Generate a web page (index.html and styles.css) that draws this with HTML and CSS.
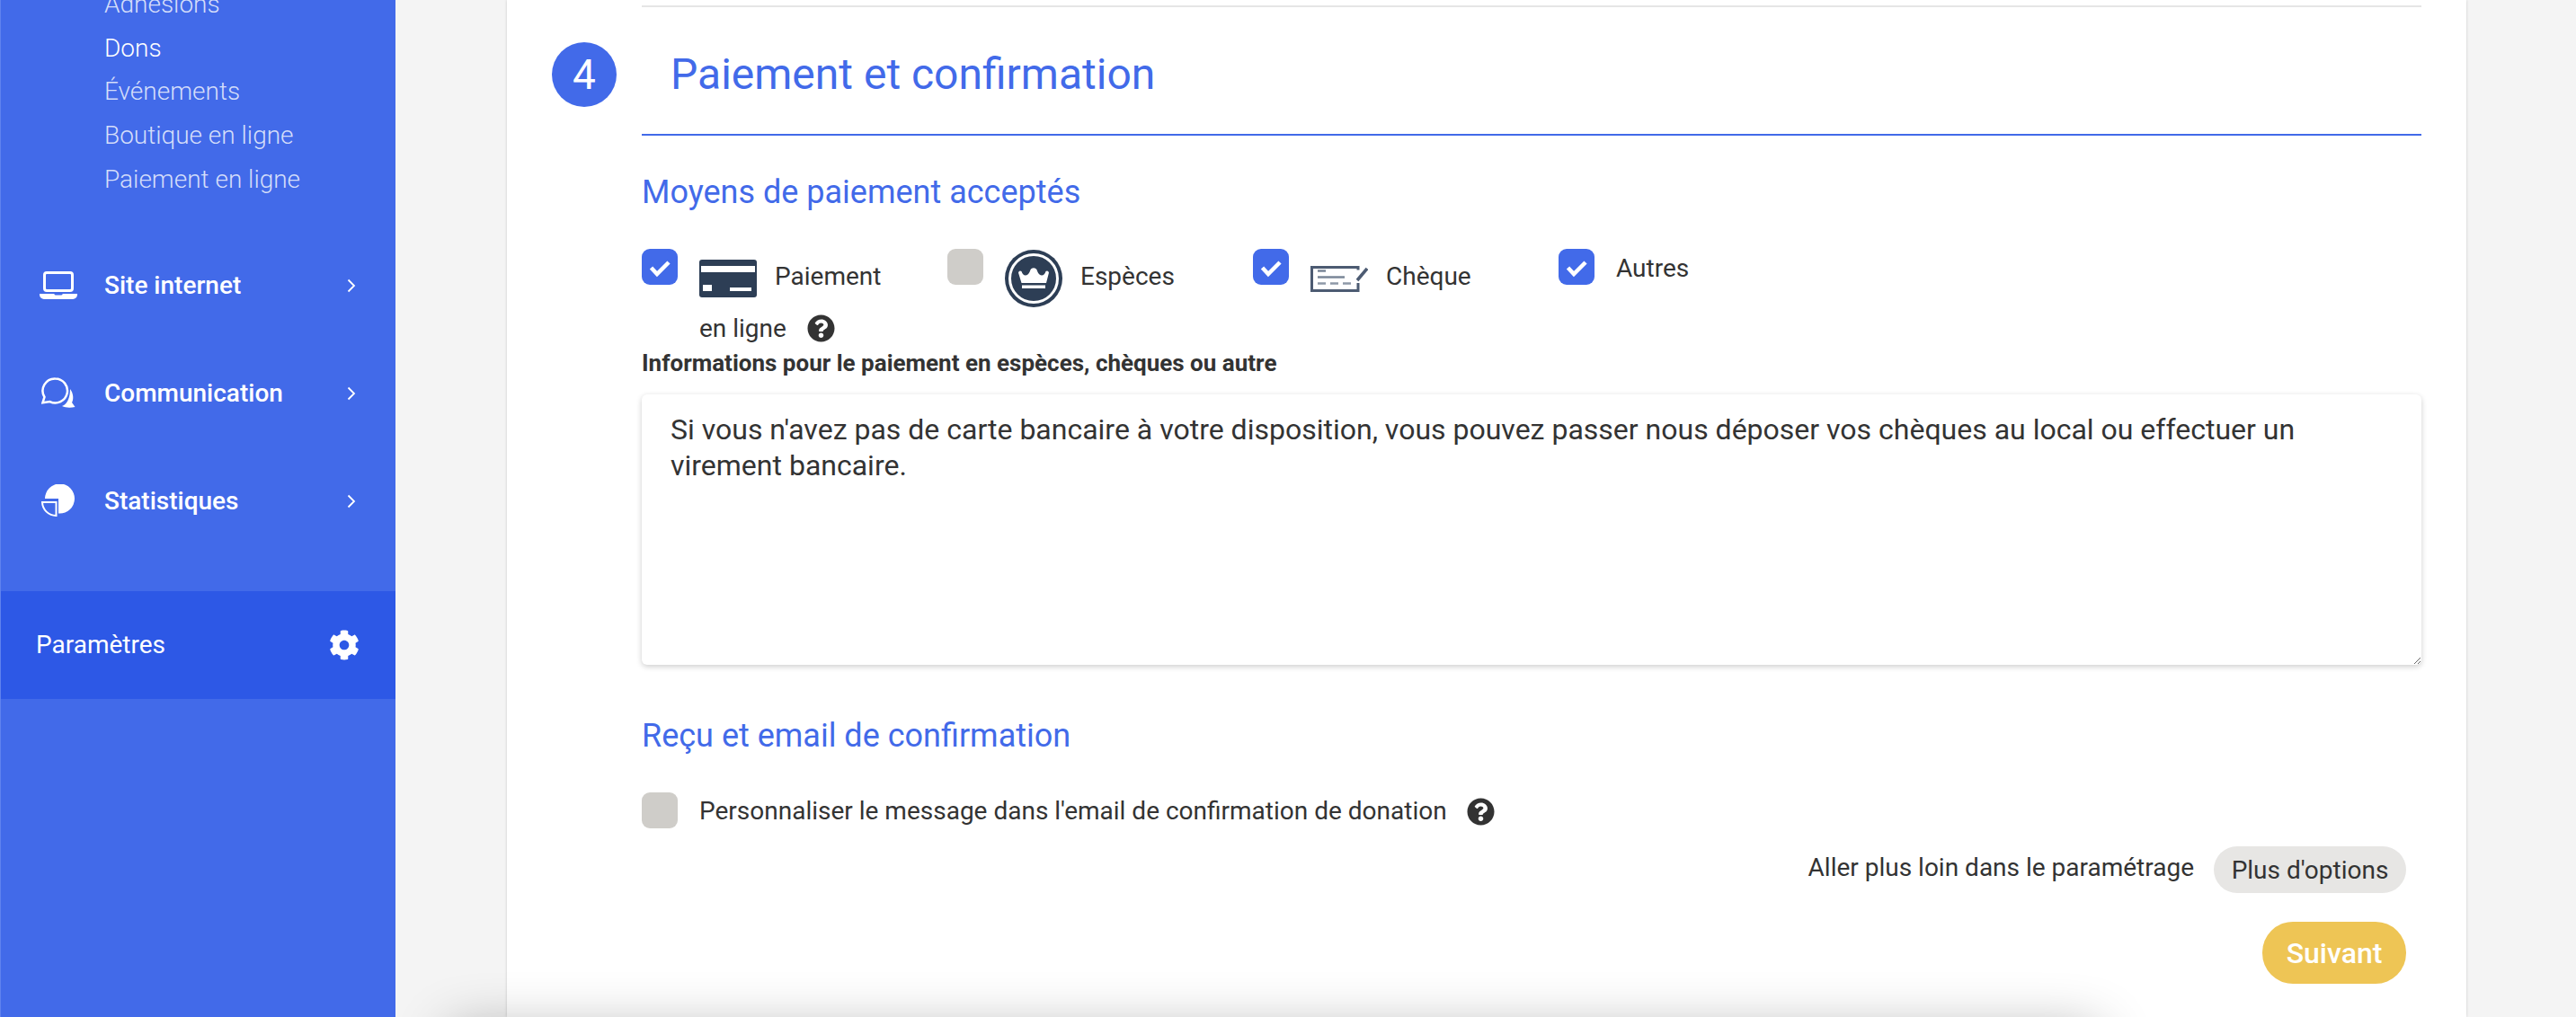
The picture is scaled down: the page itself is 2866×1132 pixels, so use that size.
FILE: index.html
```html
<!DOCTYPE html>
<html lang="fr">
<head>
<meta charset="utf-8">
<title>Paiement et confirmation</title>
<link rel="stylesheet" href="styles.css">
</head>
<body>
<aside class="sidebar">
  <ul class="sublist">
    <li>Adhésions</li>
    <li class="current">Dons</li>
    <li>Événements</li>
    <li>Boutique en ligne</li>
    <li>Paiement en ligne</li>
  </ul>
  <div class="navrow">
    <span class="navicon"><svg width="42" height="31" viewBox="0 0 42 31"><rect x="5.5" y="1.5" width="31" height="20" rx="2.5" fill="none" stroke="#fff" stroke-width="3"/><path fill="#fff" d="M0 25H16l1.5 1.5H24.5L26 25H42v1a5 5 0 0 1-5 5H5a5 5 0 0 1-5-5z"/></svg></span>
    <span class="navlabel">Site internet</span>
    <svg class="chev" width="10" height="16" viewBox="0 0 10 16"><path d="M1.5 1.5 8 8l-6.500 6.500" fill="none" stroke="#fff" stroke-width="1.800"/></svg>
  </div>
  <div class="navrow">
    <span class="navicon"><svg width="38" height="34" viewBox="0 0 38 34"><path d="M15.500 1.500a13.500 13.500 0 1 1-6 25.600L1.500 28.200l2-6.200A13.500 13.500 0 0 1 15.500 1.500z" fill="none" stroke="#fff" stroke-width="2.500"/><path fill="#fff" d="M32 13c4 5 4 12 2 15l3.500 5c-5 1-10.500 1-14.500-1 6-2 9-10 9-19z"/></svg></span>
    <span class="navlabel">Communication</span>
    <svg class="chev" width="10" height="16" viewBox="0 0 10 16"><path d="M1.5 1.5 8 8l-6.500 6.500" fill="none" stroke="#fff" stroke-width="1.800"/></svg>
  </div>
  <div class="navrow">
    <span class="navicon"><svg width="38" height="36" viewBox="0 0 38 36"><path fill="#fff" d="M4 16A16.500 16.500 0 1 1 20 32.500L19 32.500V16z"/><path d="M1 20H16.500V35A15.500 15.500 0 0 1 1 20z" fill="none" stroke="#fff" stroke-width="2"/></svg></span>
    <span class="navlabel">Statistiques</span>
    <svg class="chev" width="10" height="16" viewBox="0 0 10 16"><path d="M1.5 1.5 8 8l-6.500 6.500" fill="none" stroke="#fff" stroke-width="1.800"/></svg>
  </div>
  <div class="settings">
    <span class="settings-label">Paramètres</span>
    <svg width="34" height="34" viewBox="0 0 512 512"><path fill="#fff" d="M487.400 315.700l-42.600-24.600c4.300-23.200 4.300-47 0-70.200l42.600-24.600c4.900-2.800 7.100-8.600 5.500-14-11.100-35.600-30-67.800-54.700-94.600-3.800-4.100-10-5.100-14.800-2.300L380.800 110c-17.900-15.400-38.500-27.300-60.800-35.100V25.800c0-5.600-3.900-10.500-9.400-11.700-36.700-8.200-74.300-7.800-109.200 0-5.500 1.200-9.400 6.100-9.400 11.700V75c-22.200 7.900-42.800 19.800-60.800 35.100L88.700 85.500c-4.900-2.800-11-1.900-14.800 2.300-24.700 26.700-43.600 58.900-54.700 94.600-1.700 5.400.6 11.200 5.500 14L67.300 221c-4.300 23.200-4.300 47 0 70.200l-42.600 24.600c-4.900 2.800-7.100 8.600-5.500 14 11.100 35.600 30 67.800 54.700 94.600 3.800 4.100 10 5.100 14.800 2.300l42.600-24.600c17.900 15.400 38.500 27.300 60.800 35.100v49.200c0 5.600 3.900 10.500 9.400 11.700 36.700 8.200 74.300 7.800 109.200 0 5.500-1.200 9.400-6.100 9.400-11.700v-49.200c22.200-7.900 42.800-19.800 60.800-35.100l42.600 24.600c4.900 2.800 11 1.900 14.800-2.300 24.700-26.700 43.600-58.900 54.700-94.600 1.500-5.500-.7-11.300-5.600-14.100zM256 336c-44.100 0-80-35.900-80-80s35.900-80 80-80 80 35.900 80 80-35.900 80-80 80z"/></svg>
  </div>
</aside>

<main class="main">
  <section class="card">
    <div class="stepcol"><span class="step">4</span></div>
    <div class="content">
      <h2 class="title">Paiement et confirmation</h2>
      <h3 class="subtitle">Moyens de paiement acceptés</h3>
      <div class="methods">
        <div class="method">
          <span class="box on"><svg width="40" height="40" viewBox="0 0 40 40"><path d="M10.500 21 17 28 30 15" fill="none" stroke="#fff" stroke-width="4.500"/></svg></span>
          <p class="method-text">
            <svg class="m-icon card-icon" width="64" height="42" viewBox="0 0 64 42"><rect width="64" height="42" rx="3" fill="#2d3e55"/><rect x="2" y="7" width="60" height="7" fill="#fff"/><rect x="4" y="28" width="10" height="7" fill="#fff"/><rect x="34" y="31" width="24" height="4" fill="#fff"/></svg><span class="m-label">Paiement</span>
            en ligne<svg class="help help-a" width="31" height="31" viewBox="0 0 512 512"><path fill="#333" d="M504 256c0 136.997-111.043 248-248 248S8 392.997 8 256C8 119.083 119.043 8 256 8s248 111.083 248 248zM262.655 90c-54.497 0-89.255 22.957-116.549 63.758-3.536 5.286-2.353 12.415 2.715 16.258l34.699 26.310c5.205 3.947 12.621 3.008 16.665-2.122 17.864-22.658 30.113-35.797 57.303-35.797 20.429 0 45.698 13.148 45.698 32.958 0 14.976-12.363 22.667-32.534 33.976C247.128 238.528 216 254.941 216 296v4c0 6.627 5.373 12 12 12h56c6.627 0 12-5.373 12-12v-1.333c0-28.462 83.186-29.647 83.186-106.667 0-58.002-60.165-102-116.531-102zM256 338c-25.365 0-46 20.635-46 46 0 25.364 20.635 46 46 46s46-20.636 46-46c0-25.365-20.635-46-46-46z"/></svg>
          </p>
        </div>
        <div class="method">
          <span class="box"></span>
          <p class="method-text">
            <svg class="m-icon crown-icon" width="64" height="64" viewBox="0 0 64 64"><circle cx="32" cy="32" r="32" fill="#2d3e55"/><circle cx="32" cy="32" r="26.500" fill="#2d3e55" stroke="#fff" stroke-width="3"/><path fill="#fff" d="M15 25.500a2.500 2.500 0 0 1 3.500-1.500c.9 3.500 4 6 7 3.500 1-1 2-2.500 2.700-4.500a4 4 0 0 1 7.600 0c.7 2 1.700 3.500 2.700 4.500 3 2.500 6.100 0 7-3.500a2.500 2.500 0 0 1 3.500 1.500L46 37H18.500z"/><rect x="19" y="39.500" width="26" height="3.500" fill="#fff"/></svg><span class="m-label">Espèces</span>
          </p>
        </div>
        <div class="method">
          <span class="box on"><svg width="40" height="40" viewBox="0 0 40 40"><path d="M10.500 21 17 28 30 15" fill="none" stroke="#fff" stroke-width="4.500"/></svg></span>
          <p class="method-text">
            <svg class="m-icon cheque-icon" width="64" height="31" viewBox="0 0 64 31"><path d="M53 20v8.500H1.500V2.500H53v3" fill="none" stroke="#4c5b72" stroke-width="3"/><path d="M8 6.500h9M8 13.500h30" stroke="#7a8698" stroke-width="2.500"/><path d="M8 20.500h9M22 20.500h9M36 20.500h9" stroke="#8f99a8" stroke-width="2.500"/><path d="M52 17 63 4" stroke="#4c5b72" stroke-width="3.500"/></svg><span class="m-label">Chèque</span>
          </p>
        </div>
        <div class="method">
          <span class="box on"><svg width="40" height="40" viewBox="0 0 40 40"><path d="M10.500 21 17 28 30 15" fill="none" stroke="#fff" stroke-width="4.500"/></svg></span>
          <span class="plain-label">Autres</span>
        </div>
      </div>
      <label class="info-label" for="info">Informations pour le paiement en espèces, chèques ou autre</label>
      <textarea class="info" id="info">Si vous n'avez pas de carte bancaire à votre disposition, vous pouvez passer nous déposer vos chèques au local ou effectuer un virement bancaire.</textarea>
      <h3 class="subtitle subtitle-second">Reçu et email de confirmation</h3>
      <div class="confirm">
        <span class="box"></span>
        <span class="confirm-text">Personnaliser le message dans l'email de confirmation de donation</span>
        <svg class="help" width="31" height="31" viewBox="0 0 512 512"><path fill="#333" d="M504 256c0 136.997-111.043 248-248 248S8 392.997 8 256C8 119.083 119.043 8 256 8s248 111.083 248 248zM262.655 90c-54.497 0-89.255 22.957-116.549 63.758-3.536 5.286-2.353 12.415 2.715 16.258l34.699 26.310c5.205 3.947 12.621 3.008 16.665-2.122 17.864-22.658 30.113-35.797 57.303-35.797 20.429 0 45.698 13.148 45.698 32.958 0 14.976-12.363 22.667-32.534 33.976C247.128 238.528 216 254.941 216 296v4c0 6.627 5.373 12 12 12h56c6.627 0 12-5.373 12-12v-1.333c0-28.462 83.186-29.647 83.186-106.667 0-58.002-60.165-102-116.531-102zM256 338c-25.365 0-46 20.635-46 46 0 25.364 20.635 46 46 46s46-20.636 46-46c0-25.365-20.635-46-46-46z"/></svg>
      </div>
      <div class="more">
        <span class="more-text">Aller plus loin dans le paramétrage</span>
        <button class="btn-more" type="button">Plus d'options</button>
      </div>
      <div class="next"><button class="btn-next" type="button">Suivant</button></div>
    </div>
  </section>
  <div class="footer-shadow"></div>
</main>
</body>
</html>
```

FILE: styles.css
```css
* { box-sizing: border-box; }
html, body { margin: 0; height: 1132px; overflow: hidden; }
body {
  display: flex;
  font-family: Roboto, "Liberation Sans", sans-serif;
  color: #333;
  background: #f4f4f4;
}
p, ul, h2, h3 { margin: 0; padding: 0; }

/* Sidebar */
.sidebar {
  flex: 0 0 440px;
  height: 1132px;
  background: #426ae9;
  border-left: 1px solid #5f82ee;
  color: #fff;
  overflow: hidden;
}
.sublist {
  list-style: none;
  margin-top: -19px;
  padding: 0 0 32.500px 115px;
  font-size: 28px;
  font-weight: 300;
  line-height: 48.700px;
  color: rgba(255, 255, 255, .78);
}
.sublist .current { color: #fff; }
.navrow {
  display: flex;
  align-items: center;
  height: 120px;
}
.navicon {
  flex: 0 0 115px;
  display: flex;
  justify-content: center;
  padding-left: 12px;
}
.navlabel {
  flex: 0 0 270px;
  font-size: 28px;
  font-weight: 500;
}
.chev { margin-top: 2px; }
.settings {
  display: flex;
  align-items: center;
  justify-content: space-between;
  height: 120px;
  margin-top: 41px;
  padding: 0 40px 0 39px;
  background: #2d58e6;
}
.settings-label { font-size: 28px; margin-top: -2px; }

/* Main */
.main {
  flex: 1;
  position: relative;
  padding: 0 122px 0 124px;
}
.card {
  display: flex;
  width: 2180px;
  height: 1132px;
  padding: 6px 50px 0 50px;
  background: #fff;
  box-shadow: 0 0 3px rgba(0, 0, 0, .18);
}
.stepcol { flex: 0 0 100px; padding-top: 41px; }
.step {
  display: flex;
  align-items: center;
  justify-content: center;
  width: 72px;
  height: 72px;
  border-radius: 50%;
  background: #426ae9;
  color: #fff;
  font-size: 46px;
}
.content { flex: 1; min-width: 0; }
.title {
  height: 145px;
  padding: 48px 0 0 32px;
  border-top: 2px solid #e5e5e5;
  border-bottom: 2px solid #426ae9;
  color: #426ae9;
  font-size: 48px;
  font-weight: 400;
  line-height: 54px;
}
.subtitle {
  color: #426ae9;
  font-size: 36px;
  font-weight: 400;
  line-height: 44px;
}
.content > .subtitle:not(.subtitle-second) { margin-top: 41px; }
.subtitle-second { margin-top: 57px; }

.methods {
  display: grid;
  grid-template-columns: repeat(4, 340px);
  margin-top: 41px;
  height: 110px;
}
.method { position: relative; padding-left: 64px; }
.box {
  position: absolute;
  left: 0;
  top: 0;
  width: 40px;
  height: 40px;
  border-radius: 9px;
  background: #cfcdc9;
}
.box.on { background: #426ae9; }
.box svg { display: block; }
.method-text {
  width: 230px;
  font-size: 28px;
  line-height: 54px;
  padding-top: 4px;
}
.m-icon { display: inline-block; vertical-align: middle; margin-right: 20px; }
.crown-icon { margin-top: -12px; margin-bottom: -12px; }
.m-label { display: inline-block; vertical-align: middle; margin-bottom: 4px; }
.help-a { margin-left: 23px; vertical-align: -6px; }
.plain-label { font-size: 28px; line-height: 40px; display: block; padding-top: 2px; }

.info-label {
  display: block;
  font-size: 26px;
  font-weight: 700;
  line-height: 34px;
}
.info {
  display: block;
  width: 1980px;
  height: 301px;
  margin-top: 18px;
  padding: 19px 32px;
  border: 0;
  border-radius: 6px;
  background: #fff;
  box-shadow: 0 2px 6px rgba(0, 0, 0, .2);
  color: #333;
  font-family: Roboto, "Liberation Sans", sans-serif;
  font-size: 32px;
  line-height: 40px;
}
.confirm {
  position: relative;
  display: flex;
  align-items: center;
  height: 40px;
  margin-top: 41px;
  padding-left: 64px;
  font-size: 28px;
}
.confirm-text { margin-right: 22px; }
.confirm .help { margin-top: 2px; }

.more {
  display: flex;
  align-items: center;
  justify-content: flex-end;
  margin-top: 20px;
  padding-right: 17px;
  font-size: 28px;
}
.more-text { margin-right: 22px; margin-bottom: 6px; }
.btn-more, .btn-next {
  border: 0;
  font-family: Roboto, "Liberation Sans", sans-serif;
}
.btn-more {
  width: 214px;
  height: 52px;
  border-radius: 26px;
  background: #e7e6e4;
  color: #333;
  font-size: 28px;
}
.next {
  display: flex;
  justify-content: flex-end;
  margin-top: 32px;
  padding-right: 17px;
}
.btn-next {
  width: 160px;
  height: 69px;
  border-radius: 34px;
  background: #eec555;
  color: #fff;
  font-size: 32px;
  font-weight: 500;
}
.footer-shadow {
  position: absolute;
  left: 60px;
  top: 1145px;
  width: 1835px;
  height: 100px;
  background: #fff;
  box-shadow: 0 0 60px rgba(0, 0, 0, .3);
}
```
